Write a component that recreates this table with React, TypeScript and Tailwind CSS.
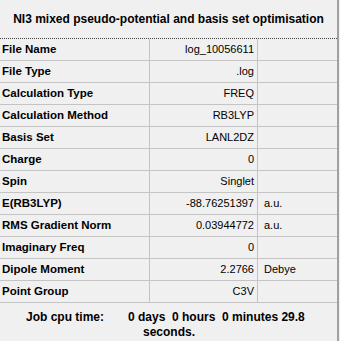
import React from "react";

const rows: { label: string; value: string; unit?: string }[] = [
  { label: "File Name", value: "log_10056611" },
  { label: "File Type", value: ".log" },
  { label: "Calculation Type", value: "FREQ" },
  { label: "Calculation Method", value: "RB3LYP" },
  { label: "Basis Set", value: "LANL2DZ" },
  { label: "Charge", value: "0" },
  { label: "Spin", value: "Singlet" },
  { label: "E(RB3LYP)", value: "-88.76251397", unit: "a.u." },
  { label: "RMS Gradient Norm", value: "0.03944772", unit: "a.u." },
  { label: "Imaginary Freq", value: "0" },
  { label: "Dipole Moment", value: "2.2766", unit: "Debye" },
  { label: "Point Group", value: "C3V" },
];

export default function App() {
  return (
    <div className="w-[340px] h-[341px] bg-[#f0f0f0] flex text-black text-[11px] font-['Liberation_Sans',Arial,sans-serif] overflow-hidden">
      <div className="w-[337px] flex flex-col">
        {/* Title */}
        <div className="h-[39px] flex items-center justify-center font-bold text-[12px] border-b border-dotted border-[#444]">
          NI3 mixed pseudo-potential and basis set optimisation
        </div>

        {/* Summary table */}
        {rows.map((row) => (
          <div key={row.label} className="h-[22px] flex border-b border-[#c4c4c4]">
            <div className="w-[150px] border-r border-[#c4c4c4] pl-[2px] flex items-center font-bold text-[11.5px]">
              {row.label}
            </div>
            <div className="w-[108px] border-r border-[#c4c4c4] pr-[3px] flex items-center justify-end">
              {row.value}
            </div>
            <div className="flex-1 pl-[6px] flex items-center">{row.unit}</div>
          </div>
        ))}

        {/* Job time */}
        <div className="flex pt-[7px] font-bold text-[12px] leading-[15px]">
          <div className="w-[128px] pl-[26px]">Job cpu time:</div>
          <div>
            <div className="whitespace-pre">0 days  0 hours  0 minutes 29.8</div>
            <div className="pl-[15px]">seconds.</div>
          </div>
        </div>
      </div>
      <div className="w-[2px] bg-[#a0a0a0]" />
    </div>
  );
}
